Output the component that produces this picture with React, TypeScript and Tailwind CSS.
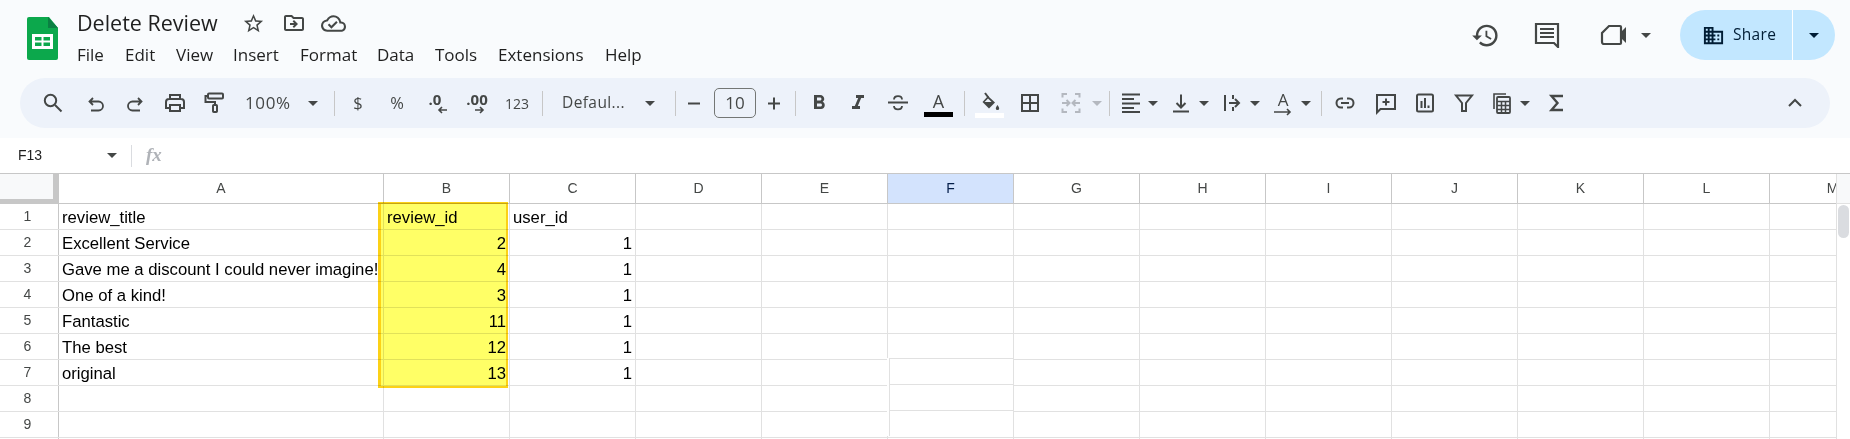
import type { ReactNode } from 'react';
import {
  MdDomain,
  MdFormatBold,
  MdFormatItalic,
  MdHistory,
  MdOutlineCloudDone,
  MdOutlineDriveFileMove,
  MdStarBorder,
} from 'react-icons/md';

const sans = { fontFamily: '"Open Sans", sans-serif' };

function Ic({ children, className = '', color = '#444746' }: { children: ReactNode; className?: string; color?: string }) {
  return (
    <svg
      viewBox="0 0 24 24"
      width="24"
      height="24"
      fill="none"
      stroke={color}
      strokeWidth="2"
      className={`shrink-0 ${className}`}
    >
      {children}
    </svg>
  );
}

function Arrow({ className = '', color = 'border-t-[#444746]' }: { className?: string; color?: string }) {
  return (
    <div className={`w-[10px] h-[5px] flex justify-center shrink-0 ${className}`}>
      <div className={`w-0 h-0 border-x-[5px] border-x-transparent border-t-[5px] ${color}`} />
    </div>
  );
}

function Sep({ className = '' }: { className?: string }) {
  return <div className={`w-px h-[25px] bg-[#c7c7c7] shrink-0 ${className}`} />;
}

function Toolbar() {
  return (
    <div className="mx-[20px] h-[50px] rounded-full bg-[#edf2fa] flex items-center text-[#444746]">
      {/* search / undo / print */}
      <Ic className="ml-[21px]">
        <circle cx="9.5" cy="9.5" r="5.7" />
        <path d="M14 14l6.5 6.5" />
      </Ic>
      <Ic className="ml-[19px] mt-[4px]" >
        <path d="M9 5L5.5 8.5 9 12M5.5 8.5H14.5a4.5 4.5 0 0 1 0 9H7" strokeWidth="1.8" />
      </Ic>
      <Ic className="ml-[15px] mt-[4px]">
        <path d="M15 5l3.5 3.5L15 12M18.5 8.5H9.5a4.5 4.5 0 0 0 0 9H17" strokeWidth="1.8" />
      </Ic>
      <Ic className="ml-[16px]">
        <path d="M7 8V4h10v4M7 17H3v-6a3 3 0 0 1 3-3h12a3 3 0 0 1 3 3v6h-4" />
        <rect x="7" y="14" width="10" height="6" />
      </Ic>
      <Ic className="ml-[15px]">
        <rect x="6" y="2.5" width="15" height="5" rx="1" />
        <path d="M6 5H3.5v6H13v3" />
        <rect x="11" y="14" width="4" height="7" rx="0.8" />
      </Ic>
      <div className="ml-[19px] w-[47px] text-[17px] tracking-[0.6px] whitespace-nowrap" style={sans}>100%</div>
      <Arrow className="ml-[16px]" />
      <Sep className="ml-[16px]" />

      {/* number formats */}
      <div className="ml-[11px] w-[24px] text-center text-[16.5px]" style={sans}>$</div>
      <div className="ml-[15px] w-[24px] text-center text-[16.5px]" style={sans}>%</div>
      <div className="ml-[16px] w-[24px] flex flex-col items-center">
        <span className="text-[15px] font-bold leading-[13px] -ml-[4px]" style={sans}>.0</span>
        <svg viewBox="0 0 10 8" width="10" height="8" fill="none" stroke="#444746" strokeWidth="1.6" className="ml-[9px]">
          <path d="M10 4H2M5 1L2 4l3 3" />
        </svg>
      </div>
      <div className="ml-[16px] w-[24px] flex flex-col items-center">
        <span className="text-[15px] font-bold leading-[13px] whitespace-nowrap" style={sans}>.00</span>
        <svg viewBox="0 0 10 8" width="10" height="8" fill="none" stroke="#444746" strokeWidth="1.6" className="ml-[6px]">
          <path d="M0 4h8M5 1l3 3-3 3" />
        </svg>
      </div>
      <div className="ml-[16px] w-[24px] flex justify-center text-[14px] whitespace-nowrap" style={sans}>123</div>
      <Sep className="ml-[13px]" />
      <div className="ml-[19px] w-[70px] text-[15.5px] tracking-[0.4px] whitespace-nowrap" style={sans}>Defaul...</div>
      <Arrow className="ml-[13px]" />
      <Sep className="ml-[20px]" />

      {/* font size */}
      <Ic className="ml-[6px]"><path d="M6 12.5h12" /></Ic>
      <div className="ml-[8px] w-[42px] h-[30px] border border-[#747775] rounded-[5px] flex items-center justify-center text-[17px]" style={sans}>10</div>
      <Ic className="ml-[6px]"><path d="M6 12.5h12M12 6.5v12" /></Ic>
      <Sep className="ml-[9px]" />

      {/* text style */}
      <MdFormatBold size={24} className="ml-[11px] shrink-0" />
      <MdFormatItalic size={24} className="ml-[15px] shrink-0" />
      <Ic className="ml-[16px]">
        <path d="M2 11.5h20M8 8.5c0-4.5 8-4.5 8 0M8 15c0 4.5 8 4.5 8 0" strokeWidth="1.8" />
      </Ic>
      <div className="ml-[14px] w-[29px] flex flex-col items-center shrink-0 mt-[3px]">
        <span className="text-[18px] leading-[19px] font-medium" style={sans}>A</span>
        <div className="w-[29px] h-[5px] bg-black mt-[1px]" />
      </div>
      <Sep className="ml-[11px]" />
      <div className="ml-[10px] w-[29px] flex flex-col items-center shrink-0 mt-[4px]">
        <svg viewBox="0 0 20 20" width="20" height="20">
          <path d="M5 1l3.4 4.5" stroke="#444746" strokeWidth="2" fill="none" />
          <path d="M8 4l7 6.5-6 6-6.5-6.5z" fill="#444746" />
          <path d="M8 6.5l3.6 3.6H4.6z" fill="#edf2fa" />
          <path d="M17.5 13c-1 1.6-1.7 2.4-1.7 3.4a1.7 1.7 0 0 0 3.4 0c0-1-.7-1.8-1.7-3.4z" fill="#444746" />
        </svg>
        <div className="w-[29px] h-[5px] bg-white mt-[1px]" />
      </div>
      <Ic className="ml-[14px]">
        <path d="M4 4h16v16H4zM12 4v16M4 12h16" />
      </Ic>
      <Ic className="ml-[17px]" color="#b4b8bf">
        <path d="M8 3H3.5v3.5M16 3h4.5v3.5M8 21H3.5v-3.5M16 21h4.5v-3.5M3 12h7M7.5 9l3 3-3 3M21 12h-7M16.5 9l-3 3 3 3" />
      </Ic>
      <Arrow className="ml-[9px]" color="border-t-[#b4b8bf]" />
      <Sep className="ml-[7px]" />

      {/* alignment */}
      <Ic className="ml-[9px]">
        <path d="M3 3.5h18M3 8h12M3 12.5h18M3 17h12M3 21h18" strokeWidth="1.8" />
      </Ic>
      <Arrow className="ml-[5px]" />
      <Ic className="ml-[11px]">
        <path d="M4 20.5h16M12 3.5v13M7.5 12l4.5 4.5 4.5-4.5" />
      </Ic>
      <Arrow className="ml-[6px]" />
      <Ic className="ml-[11px]">
        <path d="M5 4v16M9 12h10M15 8l4 4-4 4M13 4v4M13 16v4" />
      </Ic>
      <Arrow className="ml-[6px]" />
      <div className="ml-[11px] w-[24px] flex flex-col items-center shrink-0">
        <span className="text-[17px] leading-[17px] font-medium" style={sans}>A</span>
        <svg viewBox="0 0 18 8" width="18" height="8" fill="none" stroke="#444746" strokeWidth="1.6">
          <path d="M0 4h16M13 1l3 3-3 3" />
        </svg>
      </div>
      <Arrow className="ml-[6px]" />
      <Sep className="ml-[10px]" />

      {/* insert */}
      <Ic className="ml-[11px]">
        <path d="M10 7.5H8a4.5 4.5 0 0 0 0 9h2M14 7.5h2a4.5 4.5 0 0 1 0 9h-2M8 12h8" />
      </Ic>
      <Ic className="ml-[17px]">
        <path d="M3 4h18v14H6.5L3 21.5zM12 7.5v7M8.5 11h7" />
      </Ic>
      <Ic className="ml-[15px]">
        <rect x="4" y="3.5" width="16" height="17" rx="1.5" />
        <path d="M8.5 17V10M12 17V7M15.5 17v-2.5" />
      </Ic>
      <Ic className="ml-[15px]">
        <path d="M4 4.5h16l-6 7.5v8h-4v-8z" />
      </Ic>
      <Ic className="ml-[13px]">
        <path d="M5 18V3h12" strokeWidth="1.6" />
        <rect x="8" y="6" width="13" height="16" rx="1" strokeWidth="1.8" />
        <path d="M8 10.5h13M8 14.5h13M8 18.5h13M12.5 10.5V22M16.5 10.5V22" strokeWidth="1.5" />
      </Ic>
      <Arrow className="ml-[7px]" />
      <Ic className="ml-[15px]">
        <path d="M18 5H6.5l6 7-6 7H18" strokeWidth="2.4" />
      </Ic>
      <Ic className="ml-auto mr-[23px]">
        <path d="M6 15l6-6 6 6" />
      </Ic>
    </div>
  );
}

function Header() {
  const menus = [
    ['File', 'w-[48px]'],
    ['Edit', 'w-[51px]'],
    ['View', 'w-[57px]'],
    ['Insert', 'w-[67px]'],
    ['Format', 'w-[77px]'],
    ['Data', 'w-[58px]'],
    ['Tools', 'w-[63px]'],
    ['Extensions', 'w-[107px]'],
    ['Help', 'w-[40px]'],
  ];
  return (
    <div className="h-[138px] bg-[#f9fbfd]">
      <div className="h-[78px] flex text-[#1f1f1f]">
        {/* Sheets logo */}
        <svg viewBox="0 0 31 43" width="31" height="43" className="ml-[27px] mt-[17px] shrink-0">
          <path d="M2 0h20l9 11v30a2 2 0 0 1-2 2H2a2 2 0 0 1-2-2V2a2 2 0 0 1 2-2z" fill="#0ca84c" />
          <path d="M21 0l10 11H21z" fill="#0b8043" />
          <path d="M5 17h21v15H5z" fill="#fff" />
          <path d="M8 20h6.5v3.5H8zM16.5 20H23v3.5h-6.5zM8 25.5h6.5V29H8zM16.5 25.5H23V29h-6.5z" fill="#0ca84c" />
        </svg>
        <div className="ml-[19px]">
          <div className="h-[46px] flex items-center">
            <div className="w-[165px] text-[21.5px] leading-[30px] whitespace-nowrap -mt-[1px]" style={sans}>Delete Review</div>
            <MdStarBorder size={23} className="text-[#444746]" />
            <MdOutlineDriveFileMove size={24} className="ml-[17px] text-[#444746]" />
            <MdOutlineCloudDone size={25} className="ml-[15px] text-[#444746]" />
          </div>
          <div className="flex h-[17px] items-center">
            {menus.map(([label, w]) => (
              <div key={label} className={`${w} text-[17px] whitespace-nowrap`} style={sans}>{label}</div>
            ))}
          </div>
        </div>

        {/* right side actions */}
        <div className="ml-auto flex items-center h-[70px] text-[#444746]">
          <MdHistory size={29} />
          <svg viewBox="0 0 26 26" width="26" height="26" fill="none" stroke="#444746" strokeWidth="2.2" className="ml-[34px]">
            <path d="M2 2h22v23l-4-4H2z" />
            <path d="M6 7h14M6 11h14M6 15h14" strokeWidth="1.8" />
          </svg>
          <svg viewBox="0 0 28 22" width="28" height="22" fill="none" stroke="#444746" strokeWidth="2.2" className="ml-[40px]">
            <path d="M9 2h11a1 1 0 0 1 1 1v16a1 1 0 0 1-1 1H4a2 2 0 0 1-2-2V9z" />
            <path d="M21 8l5-5v16l-5-5z" fill="#444746" stroke="none" />
          </svg>
          <Arrow className="ml-[13px]" />
          <div className="ml-[29px] mr-[15px] w-[155px] h-[50px] rounded-full bg-[#c2e7ff] flex items-center text-[#001d35]">
            <div className="w-[113px] flex items-center pl-[22px] h-full border-r border-white">
              <MdDomain size={23} className="shrink-0" />
              <span className="ml-[8px] text-[15.5px] tracking-[0.3px] font-medium" style={sans}>Share</span>
            </div>
            <Arrow className="ml-[16px]" color="border-t-[#001d35]" />
          </div>
        </div>
      </div>
      <Toolbar />
    </div>
  );
}

function FormulaBar() {
  return (
    <div className="h-[35px] bg-white flex items-center text-[#444746]">
      <div className="ml-[18px] w-[89px] text-[14px] text-[#1f1f1f]" style={{ fontFamily: '"Liberation Sans", sans-serif' }}>F13</div>
      <Arrow />
      <div className="ml-[14px] w-px h-[22px] bg-[#dadce0]" />
      <div className="ml-[14px] text-[19px] italic font-bold text-[#b0b3b8]" style={{ fontFamily: '"Liberation Serif", serif' }}>fx</div>
    </div>
  );
}

const columns = ['B', 'C', 'D', 'E', 'F', 'G', 'H', 'I', 'J', 'K', 'L', 'M'];
const rows = [
  ['review_title', 'review_id', 'user_id'],
  ['Excellent Service', '2', '1'],
  ['Gave me a discount I could never imagine!', '4', '1'],
  ['One of a kind!', '3', '1'],
  ['Fantastic', '11', '1'],
  ['The best', '12', '1'],
  ['original', '13', '1'],
  ['', '', ''],
  ['', '', ''],
  ['', '', ''],
];

function Cell({ text, wide }: { text: string; wide?: boolean }) {
  const numeric = /^\d+$/.test(text);
  return (
    <div
      className={`${wide ? 'w-[325px]' : 'w-[126px]'} h-full shrink-0 border-r border-[#e1e1e1] px-[3px] pt-[2px] flex items-center whitespace-nowrap overflow-hidden ${
        numeric ? 'justify-end' : 'justify-start'
      }`}
    >
      {text}
    </div>
  );
}

function Grid() {
  return (
    <div className="relative flex border-t border-[#c7c7c7] h-[266px] overflow-hidden" style={{ fontFamily: '"Liberation Sans", sans-serif' }}>
      <div className="w-[1836px] shrink-0 overflow-hidden">
        {/* column letters */}
        <div className="flex h-[30px] border-b border-[#c7c7c7] text-[14px] text-[#444746]">
          <div className="w-[59px] shrink-0 border-r border-[#c7c7c7] bg-[#c7c7c7]">
            <div className="w-[53px] h-[25px] bg-[#f8f9fa]" />
          </div>
          <div className="w-[325px] shrink-0 border-r border-[#c7c7c7] flex items-center justify-center">A</div>
          {columns.map((c) => (
            <div
              key={c}
              className={`w-[126px] shrink-0 border-r border-[#c7c7c7] flex items-center justify-center ${
                c === 'F' ? 'bg-[#d3e3fd] text-[#041e49]' : ''
              }`}
            >
              {c}
            </div>
          ))}
        </div>
        {rows.map((row, i) => (
          <div key={i} className="flex h-[26px] border-b border-[#e1e1e1] text-[16.7px] text-black">
            <div className="w-[59px] shrink-0 border-r border-[#c7c7c7] flex items-center justify-center text-[14px] text-[#444746] pr-[3px]">
              {i < 9 ? i + 1 : ''}
            </div>
            <Cell text={row[0]} wide />
            <Cell text={row[1]} />
            <Cell text={row[2]} />
            {columns.slice(2).map((c) => (
              <Cell key={c} text="" />
            ))}
          </div>
        ))}
      </div>

      {/* scrollbar */}
      <div className="flex-1 border-l border-[#e1e1e1] bg-white">
        <div className="h-[30px] bg-[#f8f9fa] border-b border-[#e1e1e1]" />
        <div className="mx-[1px] mt-[1px] h-[33px] rounded-full bg-[#dadce0]" />
      </div>

      {/* yellow highlight drawn over column B */}
      <div className="absolute left-[378px] top-[28px] w-[130px] h-[186px] bg-[#ffff00]/60 mix-blend-multiply border-y-2 border-l-[3px] border-r-2 border-[#fcd116]" />

      {/* pasted-in cells, slightly off the grid */}
      <div className="absolute left-[887px] top-[184px] w-[126px] bg-white">
        {[0, 1, 2].map((n) => (
          <div key={n} className="h-[26px] ml-[2px] border-t border-l border-[#e1e1e1]" />
        ))}
      </div>
    </div>
  );
}

export default function App() {
  return (
    <div className="w-[1850px] h-[439px] overflow-hidden bg-white">
      <Header />
      <FormulaBar />
      <Grid />
    </div>
  );
}
